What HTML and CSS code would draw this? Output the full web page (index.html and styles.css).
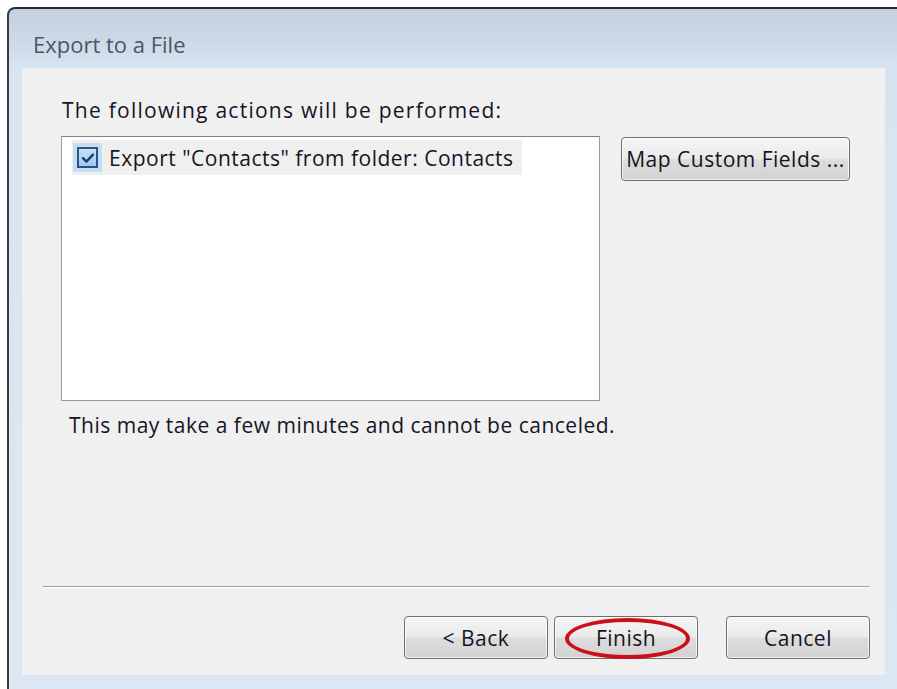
FILE: index.html
```html
<!DOCTYPE html>
<html lang="en">
<head>
<meta charset="utf-8">
<title>Export to a File</title>
<link rel="stylesheet" href="styles.css">
</head>
<body>
<div class="window">
  <div class="titlebar">Export to a File</div>
  <div class="panel">
    <p class="intro">The following actions will be performed:</p>
    <div class="actions">
      <div class="listbox">
        <div class="item">
          <span class="check">
            <span class="box">
              <svg viewBox="0 0 16 16" width="16" height="16"><path d="M3 8.2 L6.4 11.6 L13 4.6" fill="none" stroke="#17406e" stroke-width="2.4" stroke-linecap="round" stroke-linejoin="round"/></svg>
            </span>
          </span>
          <span class="label">Export "Contacts" from folder: Contacts</span>
        </div>
      </div>
      <button class="btn map">Map Custom Fields ...</button>
    </div>
    <p class="note">This may take a few minutes and cannot be canceled.</p>
    <div class="separator"></div>
    <div class="footer">
      <button class="btn nav">&lt; Back</button>
      <button class="btn nav finish">Finish<span class="ring"></span></button>
      <button class="btn nav cancel">Cancel</button>
    </div>
  </div>
</div>
</body>
</html>
```

FILE: styles.css
```css
html, body {
  margin: 0;
  padding: 0;
  background: #ffffff;
}

body {
  font-family: "Open Sans", "Noto Sans", sans-serif;
  color: #15151f;
}

.window {
  margin: 7px 0 0 7px;
  width: 890px;
  height: 682px;
  box-sizing: border-box;
  border-top: 2px solid #2b2b2b;
  border-left: 2px solid #3a3a3a;
  border-top-left-radius: 8px;
  background: linear-gradient(to bottom, #c3d1df 0px, #cbd9e7 30px, #d7e5f2 60px, #dbe8f4 100%);
  display: flex;
  flex-direction: column;
}

.titlebar {
  height: 59px;
  box-sizing: border-box;
  padding: 20px 0 0 24px;
  font-size: 22px;
  color: #4a5664;
  line-height: 30px;
}

.panel {
  margin: 0 12px 0 13px;
  height: 607px;
  background: #f0f0f0;
  display: flex;
  flex-direction: column;
  font-size: 21px;
  letter-spacing: 0.5px;
}

.intro {
  margin: 28px 0 0 40px;
  line-height: 28px;
  letter-spacing: 1.25px;
}

.actions {
  display: flex;
  align-items: flex-start;
  margin: 12px 0 0 39px;
  gap: 21px;
}

.listbox {
  width: 539px;
  height: 265px;
  box-sizing: border-box;
  background: #ffffff;
  border: 1px solid #9a9a9a;
  border-top-color: #828282;
  padding: 3px 0 0 10px;
}

.item {
  display: flex;
  align-items: center;
  width: 450px;
  height: 35px;
  background: #efefef;
}

.check {
  width: 29px;
  height: 29px;
  margin-left: 1px;
  background: #c4def5;
  display: flex;
  align-items: center;
  justify-content: center;
  flex: none;
}

.box {
  width: 21px;
  height: 21px;
  box-sizing: border-box;
  border: 2px solid #2c5482;
  background: linear-gradient(to bottom, #c8e2f8, #9ec9ef);
  display: flex;
  align-items: center;
  justify-content: center;
}

.label {
  margin-left: 7px;
  white-space: nowrap;
}

.btn {
  font-family: inherit;
  font-size: 21px;
  letter-spacing: 0.5px;
  color: #15151f;
  border: 1px solid #707070;
  border-radius: 4px;
  background: linear-gradient(to bottom, #f4f4f4 0%, #ebebeb 48%, #dddddd 52%, #d2d2d2 100%);
  box-shadow: inset 0 0 0 1px rgba(255, 255, 255, 0.7);
  padding: 0;
  cursor: default;
}

.map {
  width: 229px;
  height: 44px;
  margin-top: 1px;
}

.note {
  margin: 10px 0 0 47px;
  line-height: 28px;
}

.separator {
  margin: 147px 0 0 21px;
  width: 827px;
  height: 1px;
  background: #a0a0a0;
  border-bottom: 1px solid #ffffff;
}

.footer {
  display: flex;
  justify-content: flex-end;
  margin: 28px 15px 0 0;
}

.nav {
  width: 144px;
  height: 43px;
  position: relative;
}

.finish {
  margin-left: 6px;
}

.cancel {
  margin-left: 28px;
}

.ring {
  position: absolute;
  left: 10px;
  top: 1px;
  width: 117px;
  height: 33px;
  border: 4px solid #cc1019;
  border-radius: 50%;
}
```
